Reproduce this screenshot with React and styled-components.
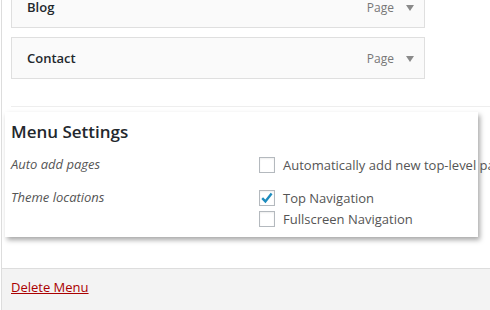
import React from "react";
import styled, { createGlobalStyle } from "styled-components";

const GlobalStyle = createGlobalStyle`
  html, body {
    margin: 0;
    padding: 0;
    background: #fff;
    overflow: hidden;
  }
  body {
    font-family: "Open Sans", "Liberation Sans", sans-serif;
    font-size: 13px;
    color: #444;
  }
`;

const Page = styled.div`
  width: 490px;
  height: 310px;
  overflow: hidden;
  padding-left: 1px;
  box-sizing: border-box;
`;

const Main = styled.div`
  border-left: 1px solid #dddddd;
  height: 100%;
  display: flex;
  flex-direction: column;
`;

const Body = styled.div`
  flex: 0 0 268px;
  display: flex;
  flex-direction: column;
  min-width: 0;
`;

const ItemList = styled.ul`
  list-style: none;
  margin: -14px 0 0 9px;
  padding: 0;
  display: flex;
  flex-direction: column;
  gap: 9px;
`;

const Item = styled.li`
  width: 414px;
  height: 42px;
  box-sizing: border-box;
  border: 1px solid #dfdfdf;
  background: #fafafa;
  display: flex;
  align-items: center;
  padding: 0 10px 0 15px;
`;

const ItemTitle = styled.span`
  flex: 1;
  font-weight: 600;
  font-size: 13px;
  color: #23282d;
`;

const ItemType = styled.span`
  font-size: 12px;
  color: #777;
  margin-right: 12px;
`;

const Arrow = styled.span`
  width: 0;
  height: 0;
  border-left: 4px solid transparent;
  border-right: 4px solid transparent;
  border-top: 6px solid #8a8a8a;
  margin-top: 2px;
`;

const Divider = styled.div`
  margin: 27px 0 0 9px;
  border-top: 1px solid #eeeeee;
`;

const Panel = styled.div`
  margin: 5px 0 0 3px;
  width: 473px;
  box-sizing: border-box;
  background: #fff;
  box-shadow: 2px 3px 5px rgba(0, 0, 0, 0.35);
  padding: 7px 0 8px 6px;
`;

const Heading = styled.h3`
  margin: 0;
  font-size: 17px;
  font-weight: 600;
  line-height: 25px;
  color: #23282d;
`;

const Row = styled.div`
  display: grid;
  grid-template-columns: 248px 1fr;
  margin-top: ${(p) => p.$gap}px;
`;

const RowLabel = styled.div`
  font-style: italic;
  font-size: 13px;
  line-height: 15px;
  padding-top: 2px;
  color: #555;
`;

const Options = styled.div`
  display: flex;
  flex-direction: column;
  gap: 1px;
`;

const Option = styled.label`
  display: flex;
  align-items: center;
  gap: 8px;
  height: 20px;
  font-size: 13px;
  color: #555;
  white-space: nowrap;
`;

const Box = styled.span`
  flex: 0 0 16px;
  width: 16px;
  height: 16px;
  box-sizing: border-box;
  border: 1px solid #b4b9be;
  background: #fff;
  box-shadow: inset 0 1px 2px rgba(0, 0, 0, 0.07);
  display: flex;
  align-items: center;
  justify-content: center;
`;

const Footer = styled.div`
  flex: 1;
  border-top: 1px solid #dddddd;
  background: #f3f3f3;
  padding: 9px 0 0 9px;
`;

const DeleteLink = styled.a`
  color: #a00;
  text-decoration: underline;
  font-size: 13px;
  line-height: 18px;
`;

function Checkbox({ checked, children }) {
  return (
    <Option>
      <Box>
        {checked && (
          <svg width="14" height="14" viewBox="0 0 14 14">
            <path
              d="M2.2 7.2 L5.4 10.4 L11.6 2.6"
              fill="none"
              stroke="#1e8cbe"
              strokeWidth="2.4"
            />
          </svg>
        )}
      </Box>
      {children}
    </Option>
  );
}

export default function App() {
  return (
    <Page>
      <GlobalStyle />
      <Main>
        <Body>
          <ItemList>
            <Item>
              <ItemTitle>Blog</ItemTitle>
              <ItemType>Page</ItemType>
              <Arrow />
            </Item>
            <Item>
              <ItemTitle>Contact</ItemTitle>
              <ItemType>Page</ItemType>
              <Arrow />
            </Item>
          </ItemList>
          <Divider />
          <Panel>
            <Heading>Menu Settings</Heading>
            <Row $gap={11}>
              <RowLabel>Auto add pages</RowLabel>
              <Options>
                <Checkbox>Automatically add new top-level pages to this menu</Checkbox>
              </Options>
            </Row>
            <Row $gap={13}>
              <RowLabel>Theme locations</RowLabel>
              <Options>
                <Checkbox checked>Top Navigation</Checkbox>
                <Checkbox>Fullscreen Navigation</Checkbox>
              </Options>
            </Row>
          </Panel>
        </Body>
        <Footer>
          <DeleteLink href="#">Delete Menu</DeleteLink>
        </Footer>
      </Main>
    </Page>
  );
}
